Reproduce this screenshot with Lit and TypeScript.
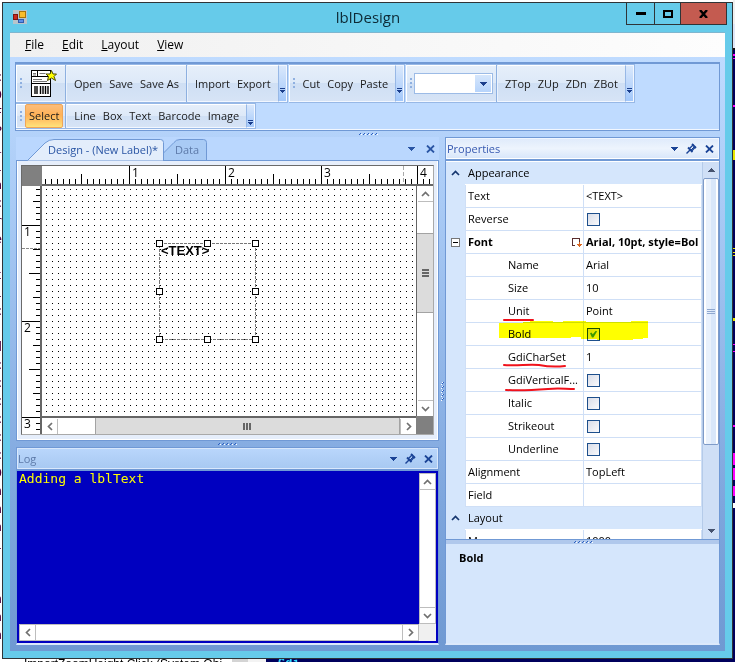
import { LitElement, html, svg, css, nothing } from "lit";
import { customElement, property } from "lit/decorators.js";
import { classMap } from "lit/directives/class-map.js";

const INCH = 96;
const TICK = 6;
const FIRST_TICK = 3;
const H_ORIGIN = 87;
const V_ORIGIN = 39;

const arrowDown = svg`<path d="M0 0h7v1h-7zM1 1h5v1h-5zM2 2h3v1h-3zM3 3h1v1h-1z" fill="currentColor"/>`;

const icon = {
  drop: html`<svg width="7" height="4" viewBox="0 0 7 4" shape-rendering="crispEdges">${arrowDown}</svg>`,
  close: html`<svg width="9" height="8" viewBox="0 0 9 8"><path d="M1 0.5L8 7.5M8 0.5L1 7.5" stroke="currentColor" stroke-width="1.8"/></svg>`,
  pin: html`<svg width="11" height="11" viewBox="0 0 11 11" fill="none" stroke="currentColor"><path d="M0.5 10.5L4 7" stroke-width="1.4"/><path d="M2 4.5L6.5 9" stroke-width="1.8"/><path d="M6 1L10 5" stroke-width="1.8"/><path d="M3.5 5.5L7.500 1.500M5.700 8L9.600 3.800" stroke-width="1.300"/><path d="M5 7L9 3" stroke-width="1"/></svg>`,
  overflow: html`<svg width="5" height="5" viewBox="0 0 5 5" shape-rendering="crispEdges"><path d="M0 0h5v1h-5zM0 2h5v1h-5zM1 3h3v1h-3zM2 4h1v1h-1z" fill="#1c3f8c"/></svg>`,
  up: html`<svg width="9" height="6" viewBox="0 0 9 6"><path d="M1 5L4.500 1.500L8 5" fill="none" stroke="currentColor" stroke-width="1.700"/></svg>`,
  down: html`<svg width="9" height="6" viewBox="0 0 9 6"><path d="M1 1L4.500 4.500L8 1" fill="none" stroke="currentColor" stroke-width="1.700"/></svg>`,
  left: html`<svg width="6" height="9" viewBox="0 0 6 9"><path d="M5 1L1.500 4.500L5 8" fill="none" stroke="currentColor" stroke-width="1.700"/></svg>`,
  right: html`<svg width="6" height="9" viewBox="0 0 6 9"><path d="M1 1L4.500 4.500L1 8" fill="none" stroke="currentColor" stroke-width="1.700"/></svg>`,
  label: html`<svg width="26" height="27" viewBox="0 0 26 27"><rect x="0.500" y="0.500" width="19" height="26" fill="#fff" stroke="#000"/><path d="M6.500 1v5.500M1 6.500h18.500M1 13.500h18.500" stroke="#000"/><path d="M2 3.500h3M2 5h3M8.500 3.500h6M2 9.500h9M2 11.500h14" stroke="#777"/><path d="M4 16v8M6 16v8M9.500 16v8M12 16v8M14.500 16v8M17 16v8" stroke="#000" stroke-width="1.400"/><path d="M20.500 0.500L22 4h3.500L23 6.500L24.500 10.500L20.500 8L16.500 10.500L17.500 6.500L15 4h4z" fill="#ffff00" stroke="#4a4a00"/></svg>`,
  app: html`<svg width="14" height="14" viewBox="0 0 14 14"><rect width="14" height="14" fill="#b9c4cb"/><rect x="0.500" y="4.500" width="4" height="5" fill="#c8281e" stroke="#7e1410"/><rect x="6.500" y="1.500" width="6" height="6" fill="#f9bd2b" stroke="#a8740a"/><rect x="5.500" y="9.500" width="5" height="3" fill="#5a8fe8" stroke="#2f5cae"/></svg>`,
};

@customElement("dot-grip")
export class DotGrip extends LitElement {
  @property({ type: Boolean, reflect: true }) vertical = false;
  static styles = css`
    :host { display: flex; align-items: center; justify-content: center; }
    svg { display: block; }
  `;
  render() {
    const cells = [0, 1, 2, 3, 4].map((i) =>
      this.vertical
        ? svg`<path d="M2 ${i * 4}h1v1h-1zM1 ${i * 4 + 1}h1v1h-1z" fill="#2b5fc0"/><path d="M1 ${i * 4}h1v1h-1zM0 ${i * 4 + 2}h1v1h-1z" fill="#fff"/>`
        : svg`<path d="M${i * 4 + 2} 0h1v1h-1zM${i * 4 + 1} 1h1v1h-1z" fill="#2b5fc0"/><path d="M${i * 4 + 3} 1h1v1h-1z" fill="#fff"/>`
    );
    return this.vertical
      ? html`<svg width="3" height="19" shape-rendering="crispEdges">${cells}</svg>`
      : html`<svg width="20" height="2" shape-rendering="crispEdges">${cells}</svg>`;
  }
}

@customElement("scroll-bar")
export class ScrollBar extends LitElement {
  @property() dir: "v" | "h" = "v";
  @property({ type: Number }) before = 0;
  @property({ type: Number }) thumb = 0;
  @property({ type: Number }) after = 1;
  static styles = css`
    :host { display: flex; background: #fff; border: 1px solid #bdbdbd; box-sizing: border-box; color: #707070; }
    :host([dir="v"]) { flex-direction: column; }
    button { all: unset; flex: none; width: 15px; height: 15px; display: flex; align-items: center; justify-content: center; }
    .bar { display: flex; flex: 1; min-width: 0; min-height: 0; }
    .v { flex-direction: column; align-items: center; }
    .h { align-items: center; }
    .thumb { background: #dcdcdc; display: flex; align-items: center; justify-content: center; }
    .v .thumb { width: 100%; border-top: 1px solid #a3a3a3; border-bottom: 1px solid #a3a3a3; }
    .h .thumb { height: 100%; border-left: 1px solid #a3a3a3; border-right: 1px solid #a3a3a3; }
    .v .start { border-bottom: 1px solid #bdbdbd; }
    .h .start { border-right: 1px solid #bdbdbd; }
    .v .end { border-top: 1px solid #bdbdbd; }
    .h .end { border-left: 1px solid #bdbdbd; }
    .track { flex-basis: 0; }
  `;
  render() {
    const v = this.dir === "v";
    return html`<div class=${v ? "bar v" : "bar h"}>
      <button class="start" aria-label=${v ? "Scroll up" : "Scroll left"}>${v ? icon.up : icon.left}</button>
      <div class="track" style="flex-grow:${this.before}"></div>
      ${this.thumb
        ? html`<div class="thumb track" style="flex-grow:${this.thumb}">
            ${v
              ? html`<svg width="7" height="8" shape-rendering="crispEdges"><path d="M0 0h7v2h-7zM0 3h7v2h-7zM0 6h7v2h-7z" fill="#666"/></svg>`
              : html`<svg width="8" height="7" shape-rendering="crispEdges"><path d="M0 0h2v7h-2zM3 0h2v7h-2zM6 0h2v7h-2z" fill="#666"/></svg>`}
          </div>`
        : nothing}
      <div class="track" style="flex-grow:${this.after}"></div>
      <button class="end" aria-label=${v ? "Scroll down" : "Scroll right"}>${v ? icon.down : icon.right}</button>
    </div>`;
  }
}

@customElement("label-designer")
export class LabelDesigner extends LitElement {
  static styles = css`
    :host { display: grid; grid-template-columns: 18px 2px minmax(0, 1fr) 17px; grid-template-rows: 18px 2px minmax(0, 1fr) 18px; border: 1px solid #6a6a6a; border-right-color: #a9a9a9; border-bottom-color: #a9a9a9; background: #fff; font: 12px "Open Sans", "Noto Sans", sans-serif; }
    .corner { background: #808080; grid-column: 1 / 3; grid-row: 1 / 3; }
    .top { grid-column: 3 / 5; grid-row: 1 / 3; border-bottom: 2px solid #666; overflow: hidden; }
    .side { grid-column: 1 / 3; grid-row: 3 / 5; border-right: 2px solid #666; overflow: hidden; }
    svg { display: block; }
    .canvas { grid-column: 3; grid-row: 3; position: relative; overflow: hidden; background: #fff; }
    .hbar { grid-column: 3; grid-row: 4; border-width: 0; border-top: 2px solid #666; }
    .vbar { grid-column: 4; grid-row: 3; border-width: 0; border-left: 1px solid #666; }
    .end { grid-column: 4; grid-row: 4; background: #808080; }
    .obj { position: absolute; left: 117px; top: 57px; width: 96px; height: 96px; font: bold 13px/16px "Liberation Sans", Arial, sans-serif; color: #000; box-sizing: border-box; padding-left: 2px; }
    .obj svg { position: absolute; left: -4px; top: -4px; }
  `;
  render() {
    const hTicks = [];
    for (let x = FIRST_TICK; x < 1560; x += TICK) {
      const phase = (x - H_ORIGIN + INCH) % INCH;
      const len = phase === 0 ? 18 : Math.abs(phase) === 48 ? 10 : 5;
      hTicks.push(svg`<rect x=${x} y=${18 - len} width="1" height=${len} fill="#000"/>`);
      if (phase === 0) {
        hTicks.push(svg`<text x=${x + 3} y="11">${(x - H_ORIGIN) / INCH + 1}</text>`);
      }
    }
    const vTicks = [];
    for (let y = FIRST_TICK; y < 1200; y += TICK) {
      const phase = (y - V_ORIGIN + INCH) % INCH;
      const len = phase === 0 ? 18 : phase === 48 ? 11 : phase % 24 === 0 ? 7 : 4;
      vTicks.push(svg`<rect x=${18 - len} y=${y} width=${len} height="1" fill="#000"/>`);
      if (phase === 0) {
        vTicks.push(svg`<text x="2" y=${y + 11}>${(y - V_ORIGIN) / INCH + 1}</text>`);
      }
    }
    const marks = [0, 48, 96];
    return html`
      <div class="corner"></div>
      <div class="top"><svg width="1560" height="18" shape-rendering="crispEdges">${hTicks}<path d="M361.500 0v18" stroke="#aaa" stroke-dasharray="4 2"/></svg></div>
      <div class="side"><svg width="18" height="1200" shape-rendering="crispEdges">${vTicks}<path d="M0 62.500h18" stroke="#888" stroke-dasharray="3 1"/></svg></div>
      <div class="canvas">
        <svg width="100%" height="100%" shape-rendering="crispEdges">
          <defs><pattern id="dots" width="6" height="6" patternUnits="userSpaceOnUse"><rect x="4" y="3" width="1" height="1" fill="#000"/></pattern></defs>
          <rect width="100%" height="100%" fill="url(#dots)"/>
        </svg>
        <div class="obj">&lt;TEXT&gt;
          <svg width="104" height="104" shape-rendering="crispEdges">
            <rect x="4.500" y="4.500" width="96" height="96" fill="none" stroke="#777" stroke-dasharray="3 1"/>
            ${marks.map((y) => marks.map((x) => x === 48 && y === 48 ? nothing : svg`<rect x=${x + 1.5} y=${y + 1.5} width="6" height="6" fill="#fff" stroke="#000"/>`))}
          </svg>
        </div>
      </div>
      <scroll-bar class="vbar" dir="v" before="32" thumb="79" after="89"></scroll-bar>
      <scroll-bar class="hbar" dir="h" before="37" thumb="304" after="0"></scroll-bar>
      <div class="end"></div>
    `;
  }
}

type Row = {
  name: string;
  value?: string;
  check?: boolean;
  child?: boolean;
  bold?: boolean;
  mark?: string;
  highlight?: boolean;
};

const appearance: Row[] = [
  { name: "Text", value: "<TEXT>" },
  { name: "Reverse", check: false },
  { name: "Font", value: "Arial, 10pt, style=Bol", bold: true },
  { name: "Name", value: "Arial", child: true },
  { name: "Size", value: "10", child: true },
  { name: "Unit", value: "Point", child: true, mark: "M1 3L30 3" },
  { name: "Bold", check: true, child: true, highlight: true },
  { name: "GdiCharSet", value: "1", child: true, mark: "M1 2C15 3 25 1 36 2C46 4 54 4 62 3" },
  { name: "GdiVerticalF...", check: false, child: true, mark: "M3 4C18 5 32 4 45 3C56 2 62 3 71 3" },
  { name: "Italic", check: false, child: true },
  { name: "Strikeout", check: false, child: true },
  { name: "Underline", check: false, child: true },
  { name: "Alignment", value: "TopLeft" },
  { name: "Field", value: "" },
];

@customElement("property-grid")
export class PropertyGrid extends LitElement {
  static styles = css`
    :host { display: flex; overflow: hidden; background: #fff; border-top: 1px solid #fff; }
    .scroll { flex: 1; min-width: 0; overflow: hidden; }
    table { width: 100%; table-layout: fixed; border-collapse: separate; border-spacing: 0; font: 11px/22px "Open Sans", "Noto Sans", sans-serif; color: #000; }
    col.gutter { width: 19px; }
    col.name { width: 118px; }
    td, th { padding: 0; height: 22px; font-weight: normal; text-align: left; white-space: nowrap; border-bottom: 1px solid #cfdff6; }
    .gutter { background: #d5e6fc; border-bottom-color: #d5e6fc; text-align: center; line-height: 0; color: #14356e; }
    .group { background: #d5e6fc; padding-left: 3px; border-bottom: 1px solid #fff; }
    .name { border-left: 1px solid #cfdff6; padding-left: 2px; position: relative; }
    .value { border-left: 1px solid #cfdff6; border-right: 1px solid #cfdff6; padding-left: 2px; overflow: hidden; }
    .child { padding-left: 42px; }
    .bold { font-weight: bold; }
    .mark { position: absolute; left: 37px; top: 17px; overflow: visible; z-index: 1; }
    .highlight { position: absolute; left: 33px; top: -2px; z-index: 1; mix-blend-mode: multiply; }
    .tag { position: absolute; right: 1px; top: 6px; }
    input { appearance: none; display: block; box-sizing: border-box; margin: 0 0 0 1px; width: 13px; height: 13px; border: 1px solid #1d4f8c; background: linear-gradient(135deg, #d9dde8, #fafafc); }
    input:checked::before { content: ""; display: block; width: 7px; height: 7px; margin: 2px; background: #3d9a2a; clip-path: polygon(0 40%, 20% 30%, 40% 55%, 85% 0, 100% 15%, 48% 100%, 28% 100%); }
    .bar { width: 17px; flex: none; box-sizing: border-box; display: flex; flex-direction: column; align-items: center; background: #cfdff6; border-left: 1px solid #b5cbe9; color: #46536f; }
    .bar button { all: unset; height: 16px; width: 15px; display: flex; align-items: center; justify-content: center; }
    .thumb { flex: none; box-sizing: border-box; width: 16px; height: 267px; border: 1px solid #7f9bc8; border-radius: 2px; background: linear-gradient(90deg, #fff 0 2px, #e9f1fc 2px 7px, #d9e7fa 7px 12px, #fff 12px); display: flex; align-items: center; justify-content: center; }
    .space { flex: 1; }
  `;
  private row(r: Row) {
    const id = "p-" + r.name.replace(/\W/g, "");
    return html`<tr>
      <td class="gutter">${r.name === "Font" ? html`<svg width="9" height="9" shape-rendering="crispEdges"><rect x="0.500" y="0.500" width="8" height="8" fill="#fff" stroke="#777"/><path d="M2 4.500h5" stroke="#000"/></svg>` : nothing}</td>
      <th scope="row" class=${classMap({ name: true, child: !!r.child, bold: !!r.bold })}>
        ${r.check === undefined ? r.name : html`<label for=${id}>${r.name}</label>`}
        ${r.bold ? html`<svg class="tag" width="11" height="11" shape-rendering="crispEdges"><path d="M4 8.500H1.500V1.500H8.500V5" fill="none" stroke="#5a2d2d"/><path d="M8 5h1v2h2v1h-1v1h-1v1h-1v-1h-1v-1h-1v-1h2z" fill="#d9661f"/></svg>` : nothing}
        ${r.mark ? html`<svg class="mark" width="72" height="6"><path d=${r.mark} fill="none" stroke="#f0121c" stroke-width="2" stroke-linecap="round"/></svg>` : nothing}
        ${r.highlight ? html`<svg class="highlight" width="149" height="19"><path d="M0 2H24V1H31V0H54V1H64V0H87V1H132V0H149V17H144V18H134V19H98V18H82V16H72V17H0z" fill="#ffff00"/></svg>` : nothing}
      </th>
      <td class=${classMap({ value: true, bold: !!r.bold })}>
        ${r.check === undefined ? r.value : html`<input id=${id} type="checkbox" .checked=${r.check} />`}
      </td>
    </tr>`;
  }
  private group(name: string) {
    return html`<tr><td class="gutter">${icon.up}</td><th class="group" colspan="2">${name}</th></tr>`;
  }
  render() {
    return html`
      <div class="scroll">
        <table>
          <colgroup><col class="gutter" /><col class="name" /><col /></colgroup>
          <tbody>
            ${this.group("Appearance")} ${appearance.map((r) => this.row(r))} ${this.group("Layout")}
            ${this.row({ name: "Max", value: "1000" })}
          </tbody>
        </table>
      </div>
      <div class="bar">
        <button aria-label="Scroll up"><svg width="7" height="4" viewBox="0 0 7 4" shape-rendering="crispEdges"><path d="M3 0h1v1h1v1h1v1h1v1h-7v-1h1v-1h1v-1h1z" fill="currentColor"/></svg></button>
        <div class="thumb"><svg width="8" height="6" shape-rendering="crispEdges"><path d="M0 0.500h8M0 2.500h8M0 4.500h8" stroke="#8fa8d0"/></svg></div>
        <div class="space"></div>
        <button aria-label="Scroll down">${icon.drop}</button>
      </div>
    `;
  }
}

const codeColumn = ["", "c", "D", "F", "P", "i", "l", "a", "c", "r", "e", "", "t", "l", "c", "", "d", "c", "c", "c", "c", "c", "c", "D", "n", "n", "n", "l", "", "", "n", "n", "n"];

@customElement("app-root")
export class AppRoot extends LitElement {
  static styles = css`
    :host { display: block; position: relative; height: 100vh; min-height: 560px; box-sizing: border-box; padding: 2px 2px 3px; background: #fff; overflow: hidden; font: 11px/16px "Open Sans", "Noto Sans", sans-serif; color: #1a1a1a; }
    button { all: unset; box-sizing: border-box; white-space: nowrap; }
    .behind-left { position: absolute; left: 0; top: 50px; bottom: 0; width: 2px; overflow: hidden; color: #4b0040; font: 13px/18px "DejaVu Sans Mono", monospace; display: flex; flex-direction: column; align-items: flex-end; }
    .behind-right { position: absolute; right: 0; top: 0; bottom: 0; width: 2px; background: linear-gradient(#f0f0f0 0 24px, #dfe6f7 24px 48px, #111 48px 50px, #00005c 50px); }
    .behind-right svg { display: block; }
    .behind-bottom { position: absolute; left: 0; right: 0; bottom: 0; height: 3px; display: flex; overflow: hidden; }
    .code { width: 232px; flex: none; box-sizing: border-box; padding-left: 24px; font: 12px/10px "Liberation Sans", sans-serif; white-space: nowrap; overflow: hidden; color: #000; }
    .thumb { width: 16px; background: #d4d4d4; flex: none; }
    .gap { width: 18px; flex: none; background: #f3f3f3; }
    .navy { flex: 1; background: #00005c; color: #2fd8ff; font: bold 12px/10px "Liberation Mono", monospace; padding-left: 12px; }

    .window { position: relative; height: 100%; box-sizing: border-box; border: 1px solid #2f3437; background: #66cbea; padding: 0 7px 7px; display: flex; flex-direction: column; }
    .title { flex: none; height: 29px; display: flex; align-items: flex-start; position: relative; }
    .title h1 { margin: 0; flex: 1; text-align: center; font: 15px/28px "Open Sans", "Noto Sans", sans-serif; color: #0d2a36; padding-left: 83px; }
    .title .app { margin: 7px 0 0 3px; flex: none; }
    .sys { display: flex; border: 1px solid #2f3437; border-top: 0; height: 21px; margin-right: -2px; color: #000; }
    .sys button { width: 27px; display: flex; align-items: center; justify-content: center; }
    .sys button + button { border-left: 1px solid #2f3437; width: 26px; }
    .sys button.x { background: #c45b50; width: 46px; }
    .menu { flex: none; height: 25px; background: linear-gradient(90deg, #f0f0f0, #fdfdfd); border-top: 1px solid #7fb6cf; box-sizing: border-box; display: flex; align-items: center; padding-left: 6px; font-size: 12px; color: #000; }
    .menu button { padding: 0 9px; }
    .client { flex: 1; min-height: 0; display: flex; flex-direction: column; padding: 5px 5px 6px; background: linear-gradient(#bfdbff, #a9caf5 25%, #7ea6dd 75%, #6f99d2); }

    .tools { flex: none; border: 1px solid #7099d5; border-top-width: 2px; background: #bfdbff; box-shadow: inset 0 -1px #f2f7ff; padding: 0 0 1px; }
    .line { display: flex; gap: 1px; }
    .strip { display: flex; height: 39px; border: 1px solid #97b8e6; border-left-width: 0; box-sizing: border-box; background: linear-gradient(#e6effa, #dde9f8 50%, #cfdff4 50%, #d7e4f6); box-shadow: inset 1px 1px #fff, inset 0 -1px #f2f7ff; padding-left: 4px; align-items: stretch; }
    .strip.low { height: 26px; }
    .grip { width: 2px; align-self: center; height: 11px; background: repeating-linear-gradient(#8fb0e0 0 2px, transparent 2px 4px); margin-right: 1px; }
    .group { display: flex; gap: 1px; padding: 0 4px; align-items: stretch; }
    .group button { padding: 0 3px; display: flex; align-items: center; }
    .group button.new { padding: 0 4px; }
    .sep { width: 1px; background: #8db0e0; border-right: 1px solid #eaf2fd; }
    .strip .more { width: 9px; padding: 0 0 8px; display: flex; align-items: flex-end; justify-content: center; background: linear-gradient(#d9e8fc, #a3c8fb); border: 1px solid #f2f7ff; border-left: 1px solid #97b8e6; }
    .strip.low .more { padding-bottom: 2px; }
    .strip .select { border: 1px solid #f0a656; border-radius: 2px; background: linear-gradient(#fbbd7c, #ffb257 45%, #ffc96a 75%, #ffe37a); padding: 0 3px; margin: 0 2px; }
    .combo { align-self: center; display: flex; position: relative; margin: 0 3px 0 1px; color: #1c3f8c; }
    .combo select { appearance: none; width: 79px; height: 21px; border: 1px solid #9cbbe6; background: linear-gradient(#d5e6fc, #b7d4fb) right / 16px 100% no-repeat content-box, #fff; border-radius: 0; margin: 0; padding: 1px; }
    .combo svg { position: absolute; right: 6px; top: 9px; }

    .split { flex: none; height: 6px; }
    .main { flex: 1; min-height: 0; display: grid; grid-template-columns: minmax(0, 1fr) 6px 275px; }
    .left { display: grid; grid-template-rows: 304px 6px minmax(0, 1fr); min-width: 0; }
    .docs { display: flex; flex-direction: column; min-height: 0; padding-left: 1px; }
    .tabs { flex: none; height: 24px; display: flex; position: relative; background: #bad7fe; }
    .tabs > svg { position: absolute; left: 0; top: 2px; }
    .tabs button { position: relative; line-height: 26px; color: #2a55a4; }
    .tabs .on { margin-left: 32px; width: 127px; }
    .tabs .off { color: #5d7aa8; }
    .actions { display: flex; gap: 8px; align-items: center; color: #1a4396; }
    .actions button { display: flex; }
    .tabs .actions { margin-left: auto; padding-right: 4px; gap: 11px; }
    .page { flex: 1; min-height: 0; display: flex; border: 1px solid #7099d5; border-top: 0; box-shadow: inset 1px 0 #fff, inset -1px -1px #fff; background: #e6eefb; padding: 4px 4px 5px; }
    .page label-designer { flex: 1; }

    .pane { display: flex; flex-direction: column; border: 1px solid #7099d5; border-bottom: 2px solid #dce9fb; background: #d5e6fc; min-height: 0; min-width: 0; }
    .head { flex: none; height: 21px; display: flex; align-items: center; justify-content: space-between; padding: 0 4px 0 0; border: 1px solid #f0f6ff; box-sizing: border-box; background: linear-gradient(#e0ebfb, #edf4fd 50%, #d8e6fa); color: #3558b0; border-bottom-color: #fff; }
    .head h2 { font: inherit; margin: 0; }
    .log { margin-left: 1px; }
    .log .head { background: linear-gradient(#b9d6fb, #a8c9f2); color: #5d7aa8; border-color: #d9e8fc; }
    .rule { flex: none; height: 2px; background: #7099d5; }
    .console { flex: 1; min-height: 0; display: grid; grid-template-columns: minmax(0, 1fr) 17px; grid-template-rows: minmax(0, 1fr) 17px; background: #0000c0; padding: 2px; }
    .console output { color: #ffff00; font: 13px/12px "DejaVu Sans Mono", monospace; white-space: pre; }
    .console i { background: #f0f0f0; }
    .props property-grid { flex: 1; min-height: 0; }
    .props dot-grip { flex: none; height: 5px; box-sizing: border-box; background: #b0c8ec; border-top: 1px solid #7099d5; }
    .desc { flex: none; height: 99px; box-sizing: border-box; padding: 6px 13px; font-weight: bold; color: #000; }
  `;

  private menu(name: string) {
    return html`<button role="menuitem"><u>${name[0]}</u>${name.slice(1)}</button>`;
  }
  private buttons(names: string[]) {
    return html`<div class="group">${names.map((n) => html`<button>${n}</button>`)}</div>`;
  }
  private more = html`<button class="more" aria-label="More buttons">${icon.overflow}</button>`;

  render() {
    return html`
      <div class="behind-left" aria-hidden="true">${codeColumn.map((c) => html`<span>${c || "\u00a0"}</span>`)}</div>
      <div class="behind-right" aria-hidden="true"><svg width="2" height="662" shape-rendering="crispEdges"><path d="M0 54h2v2h-2zM0 58h2v1h-2zM0 105h2v2h-2zM0 344h2v1h-2zM0 351h2v1h-2zM0 425h2v2h-2zM0 453h2v12h-2zM0 468h2v12h-2zM0 486h2v10h-2z" fill="#ff00ff"/><path d="M0 150h2v10h-2zM0 248h2v1h-2zM0 252h2v1h-2zM0 255h2v1h-2zM0 318h2v3h-2z" fill="#e8e800"/><path d="M0 503h2v5h-2z" fill="#fff"/></svg></div>
      <div class="behind-bottom" aria-hidden="true">
        <div class="code">ImportZoomHeight Click (System.Obj</div><div class="thumb"></div><div class="gap"></div><div class="navy">Gdi</div>
      </div>
      <div class="window">
        <header class="title">
          <span class="app">${icon.app}</span>
          <h1>lblDesign</h1>
          <div class="sys">
            <button aria-label="Minimize"><svg width="10" height="3"><rect width="10" height="3"/></svg></button>
            <button aria-label="Maximize"><svg width="10" height="8"><rect x="1" y="1" width="8" height="6" fill="none" stroke="#000" stroke-width="2"/></svg></button>
            <button class="x" aria-label="Close"><svg width="9" height="8"><path d="M1 0L8 8M8 0L1 8" stroke="#000" stroke-width="2.400"/></svg></button>
          </div>
        </header>
        <nav class="menu" role="menubar">${["File", "Edit", "Layout", "View"].map((m) => this.menu(m))}</nav>
        <div class="client">
          <div class="tools">
            <div class="line">
              <div class="strip">
                <span class="grip"></span>
                <div class="group"><button class="new" aria-label="New label">${icon.label}</button></div>
                <span class="sep"></span>
                ${this.buttons(["Open", "Save", "Save As"])}
                <span class="sep"></span>
                ${this.buttons(["Import", "Export"])} ${this.more}
              </div>
              <div class="strip"><span class="grip"></span>${this.buttons(["Cut", "Copy", "Paste"])} ${this.more}</div>
              <div class="strip">
                <span class="grip"></span>
                <div class="combo"><select aria-label="Item"></select>${icon.drop}</div>
                <span class="sep"></span>
                ${this.buttons(["ZTop", "ZUp", "ZDn", "ZBot"])} ${this.more}
              </div>
            </div>
            <div class="line">
              <div class="strip low">
                <span class="grip"></span>
                <button class="select">Select</button>
                <span class="sep"></span>
                ${this.buttons(["Line", "Box", "Text", "Barcode", "Image"])} ${this.more}
              </div>
            </div>
          </div>
          <dot-grip class="split"></dot-grip>
          <div class="main">
            <div class="left">
              <section class="docs">
                <div class="tabs" role="tablist">
                  <svg width="100%" height="22">
                    <path d="M140 21.500L158 3.500Q160 0.500 164 0.500H187.500Q190.500 0.500 190.500 3.500V21.500z" fill="#a9cbf5" stroke="#7099d5"/>
                    <path d="M0 21.500H2000" stroke="#7099d5"/>
                    <path d="M0 22V21.500H11.500L29 4Q33 0.500 38 0.500H144.500Q147.500 0.500 147.500 3.500V22z" fill="#e3edfb" stroke="#7099d5"/>
                    <path d="M0 21.500H11" stroke="#7099d5"/>
                  </svg>
                  <button role="tab" aria-selected="true" class="on">Design - (New Label)*</button>
                  <button role="tab" aria-selected="false" class="off">Data</button>
                  <div class="actions">
                    <button aria-label="Open documents">${icon.drop}</button>
                    <button aria-label="Close document">${icon.close}</button>
                  </div>
                </div>
                <div class="page"><label-designer></label-designer></div>
              </section>
              <dot-grip></dot-grip>
              <section class="pane log">
                <div class="head"><h2>Log</h2>
                  <div class="actions">
                    <button aria-label="Log options">${icon.drop}</button>
                    <button aria-label="Pin log">${icon.pin}</button>
                    <button aria-label="Close log">${icon.close}</button>
                  </div>
                </div>
                <div class="rule"></div>
                <div class="console">
                  <output>Adding a lblText</output>
                  <scroll-bar dir="v"></scroll-bar>
                  <scroll-bar dir="h"></scroll-bar>
                  <i></i>
                </div>
              </section>
            </div>
            <dot-grip vertical></dot-grip>
            <section class="pane props">
              <div class="head"><h2>Properties</h2>
                <div class="actions">
                  <button aria-label="Properties options">${icon.drop}</button>
                  <button aria-label="Pin properties">${icon.pin}</button>
                  <button aria-label="Close properties">${icon.close}</button>
                </div>
              </div>
              <div class="rule"></div>
              <property-grid></property-grid>
              <dot-grip></dot-grip>
              <div class="desc">Bold</div>
            </section>
          </div>
        </div>
      </div>
    `;
  }
}
